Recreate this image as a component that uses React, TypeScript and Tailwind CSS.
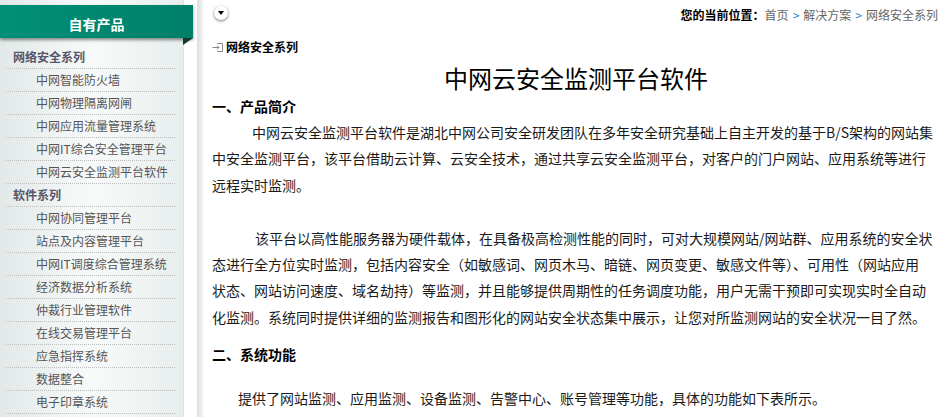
import React from 'react';

type NavRow = { label: string; group?: boolean };

const rows: NavRow[] = [
  { label: '网络安全系列', group: true },
  { label: '中网智能防火墙' },
  { label: '中网物理隔离网闸' },
  { label: '中网应用流量管理系统' },
  { label: '中网IT综合安全管理平台' },
  { label: '中网云安全监测平台软件' },
  { label: '软件系列', group: true },
  { label: '中网协同管理平台' },
  { label: '站点及内容管理平台' },
  { label: '中网IT调度综合管理系统' },
  { label: '经济数据分析系统' },
  { label: '仲裁行业管理软件' },
  { label: '在线交易管理平台' },
  { label: '应急指挥系统' },
  { label: '数据整合' },
  { label: '电子印章系统' },
];

const Sidebar = () => (
  <aside className="w-[184px] shrink-0 flex flex-col pt-[5px] border-r border-[#d3e9e2] bg-gradient-to-r from-[#e2e9e8] via-[#f8fafa] to-[#e7eeed]">
    {/* header band, overhangs the sidebar edge */}
    <div className="relative w-[193px] h-[33px] flex items-center justify-center pt-[6px] bg-gradient-to-r from-[#009078] to-[#007f69] shadow-[0_2px_3px_rgba(0,0,0,0.45)]">
      <span className="text-white font-bold text-[14px]">自有产品</span>
      <div className="absolute right-0 top-full w-[10px] h-[7px] bg-[#12372f] [clip-path:polygon(0_0,100%_0,0_100%)]" />
    </div>
    <ul className="ml-[6px] mr-[8px] mt-[8px]">
      {rows.map((r) => (
        <li
          key={r.label}
          className={`h-[23px] flex items-center border-b border-dotted border-[#bdbdbd] text-[12px] ${
            r.group ? 'pl-[7px] font-bold text-[#55556b]' : 'pl-[30px] text-[#555]'
          }`}
        >
          {r.label}
        </li>
      ))}
    </ul>
  </aside>
);

const Arrow = () => <span className="text-[#2a86cc] mx-[4px]">&gt;</span>;

const EntryIcon = () => (
  <svg width="12" height="11" viewBox="0 0 12 11" className="mr-[2px]">
    <path d="M5 1.5h5.5v8H5" fill="none" stroke="#888" strokeWidth="1" />
    <path d="M0.5 5.5h6.5M5 3.5l2 2-2 2" fill="none" stroke="#888" strokeWidth="1" />
  </svg>
);

const App = () => {
  return (
    <div
      className="w-[946px] h-[417px] overflow-hidden flex bg-white text-[#1a1a1a]"
      style={{ fontFamily: '"Noto Sans CJK SC", "Noto Sans", sans-serif' }}
    >
      <Sidebar />
      <div className="w-[13px] shrink-0" />
      <div className="w-[6px] shrink-0 bg-gradient-to-r from-[#dedede] to-[#f3f3f3]" />

      <main className="flex-1 pl-[9px]">
        {/* top bar */}
        <div className="h-[28px] flex items-center justify-between pr-[8px]">
          <div className="ml-[2px] mt-[-2px] w-[14px] h-[14px] rounded-full bg-white shadow-[0_1px_3px_rgba(0,0,0,0.55)] flex items-center justify-center">
            <div className="w-0 h-0 border-l-[3.5px] border-r-[3.5px] border-t-[4px] border-l-transparent border-r-transparent border-t-black" />
          </div>
          <div className="text-[12px] mt-[2px]">
            <span className="font-bold text-black">您的当前位置：</span>
            <span className="text-[#666]">首页</span>
            <Arrow />
            <span className="text-[#666]">解决方案</span>
            <Arrow />
            <span className="text-[#666]">网络安全系列</span>
          </div>
        </div>

        <div className="mt-[9px] h-[20px] flex items-center text-[12px] font-bold text-black">
          <EntryIcon />
          网络安全系列
        </div>

        <h1 className="mt-[6px] w-[728px] text-center text-[24px] leading-[30px] text-black font-normal">
          中网云安全监测平台软件
        </h1>

        <h2 className="w-[734px] text-[14px] leading-[26px] font-bold text-black">一、产品简介</h2>

        <div className="w-[734px] text-[14px] leading-[26.4px]">
          <p className="indent-[40px]">
            中网云安全监测平台软件是湖北中网公司安全研发团队在多年安全研究基础上自主开发的基于B/S架构的网站集
            <br />
            中安全监测平台，该平台借助云计算、云安全技术，通过共享云安全监测平台，对客户的门户网站、应用系统等进行
            <br />
            远程实时监测。
          </p>
          <p>&nbsp;</p>
          <p className="indent-[43px]">
            该平台以高性能服务器为硬件载体，在具备极高检测性能的同时，可对大规模网站/网站群、应用系统的安全状
            <br />
            态进行全方位实时监测，包括内容安全（如敏感词、网页木马、暗链、网页变更、敏感文件等）、可用性（网站应用
            <br />
            状态、网站访问速度、域名劫持）等监测，并且能够提供周期性的任务调度功能，用户无需干预即可实现实时全自动
            <br />
            化监测。系统同时提供详细的监测报告和图形化的网站安全状态集中展示，让您对所监测网站的安全状况一目了然。
          </p>
        </div>

        <h2 className="mt-[11px] text-[14px] leading-[26px] font-bold text-black">二、系统功能</h2>

        <p className="mt-[18px] pl-[26px] text-[14px] leading-[26px]">
          提供了网站监测、应用监测、设备监测、告警中心、账号管理等功能，具体的功能如下表所示。
        </p>
      </main>
    </div>
  );
};

export default App;
